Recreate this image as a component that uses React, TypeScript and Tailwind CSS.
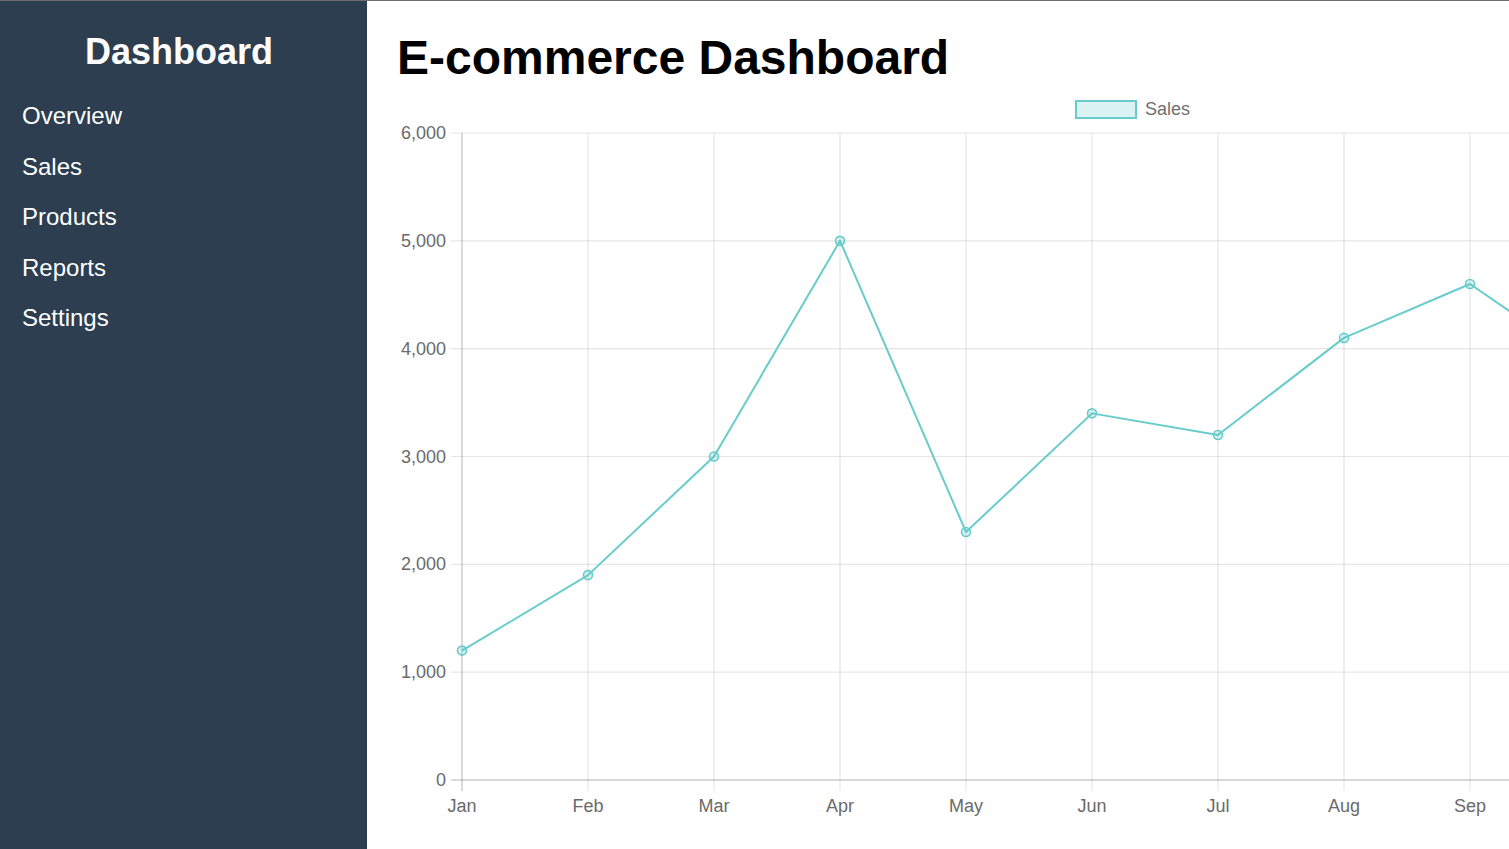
import React from "react";

// Monthly sales, same order as MONTHS
const MONTHS = ["Jan", "Feb", "Mar", "Apr", "May", "Jun", "Jul", "Aug", "Sep", "Oct", "Nov", "Dec"];
const SALES = [1200, 1900, 3000, 5000, 2300, 3400, 3200, 4100, 4600, 3800, 4400, 5200];

const NAV = ["Overview", "Sales", "Products", "Reports", "Settings"];

/* chart geometry, in page pixels (the svg viewBox starts at the page origin of the chart) */
const X0 = 462;
const STEP = 126;
const Y_ZERO = 780;
const Y_TOP = 133;
const MAX = 6000;
const LEFT = 397;
const TOP = 82;
const W = 1471;
const H = 767;

const xAt = (i: number) => X0 + i * STEP;
const yAt = (v: number) => Y_ZERO - (v / MAX) * (Y_ZERO - Y_TOP);

const FONT = '"Liberation Sans", Arial, sans-serif';
const TEAL = "rgb(104,204,204)";

function SalesChart() {
  const ticks = [0, 1000, 2000, 3000, 4000, 5000, 6000];
  const lastX = xAt(MONTHS.length - 1);
  const points = SALES.map((v, i) => `${xAt(i)},${yAt(v)}`).join(" ");

  return (
    <svg
      width={W}
      height={H}
      viewBox={`${LEFT} ${TOP} ${W} ${H}`}
      className="block shrink-0"
      style={{ fontFamily: FONT }}
    >
      {/* legend */}
      <rect x={1076} y={101} width={60} height={17} fill="rgba(75,192,192,0.2)" stroke={TEAL} strokeWidth={2} />
      <text x={1145} y={109} fontSize={18} fill="#707070" dominantBaseline="central">
        Sales
      </text>

      {/* horizontal grid */}
      {ticks.map((t) => (
        <g key={t}>
          <line
            x1={451}
            x2={lastX + 20}
            y1={yAt(t)}
            y2={yAt(t)}
            stroke={t === 0 ? "rgba(0,0,0,0.2)" : "rgba(0,0,0,0.1)"}
            strokeWidth={t === 0 ? 1.5 : 1.2}
          />
          <text x={446} y={yAt(t)} fontSize={18} fill="#6a6a6a" textAnchor="end" dominantBaseline="central">
            {t.toLocaleString("en-US")}
          </text>
        </g>
      ))}

      {/* vertical grid + month labels */}
      {MONTHS.map((m, i) => (
        <g key={m}>
          <line
            x1={xAt(i)}
            x2={xAt(i)}
            y1={Y_TOP}
            y2={791}
            stroke={i === 0 ? "rgba(0,0,0,0.2)" : "rgba(0,0,0,0.1)"}
            strokeWidth={i === 0 ? 1.5 : 1.2}
          />
          <text x={xAt(i)} y={806} fontSize={18} fill="#6a6a6a" textAnchor="middle" dominantBaseline="central">
            {m}
          </text>
        </g>
      ))}

      {/* sales line */}
      <polyline points={points} fill="none" stroke={TEAL} strokeWidth={2} strokeLinejoin="round" />
      {SALES.map((v, i) => (
        <circle
          key={i}
          cx={xAt(i)}
          cy={yAt(v)}
          r={4.5}
          fill="rgba(75,192,192,0.2)"
          stroke={TEAL}
          strokeWidth={1.6}
        />
      ))}
    </svg>
  );
}

export default function App() {
  return (
    <div
      className="flex h-screen w-full overflow-hidden border-t border-[#6e6e6e] bg-white"
      style={{ fontFamily: FONT }}
    >
      {/* ── Sidebar ── */}
      <aside className="w-[367px] shrink-0 bg-[#2c3e50] pl-[22px] pr-[31px] pt-[30.5px] text-white">
        <h2 className="text-center text-4xl font-bold">Dashboard</h2>
        <ul className="mt-[19px]">
          {NAV.map((item) => (
            <li key={item} className="py-[11.5px] text-2xl leading-[27.5px]">
              {item}
            </li>
          ))}
        </ul>
      </aside>

      {/* ── Main ── */}
      <main className="min-w-0 flex-1 overflow-hidden pl-[30px] pt-[33px]">
        <h1 className="text-5xl font-bold leading-none text-black">E-commerce Dashboard</h1>
        <SalesChart />
      </main>
    </div>
  );
}
